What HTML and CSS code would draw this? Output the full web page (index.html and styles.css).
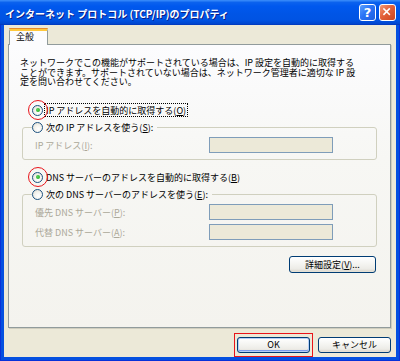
FILE: index.html
```html
<!DOCTYPE html>
<html lang="ja">
<head>
<meta charset="utf-8">
<title>インターネット プロトコル (TCP/IP)のプロパティ</title>
<link rel="stylesheet" href="styles.css">
</head>
<body>
<div class="window">
  <header class="titlebar">
    <span class="title">インターネット プロトコル (TCP/IP)のプロパティ</span>
    <div class="caption-buttons">
      <span class="cap-btn cap-help">?</span>
      <span class="cap-btn cap-close"><svg viewBox="0 0 17 17" width="15" height="15"><path d="M4.5 4.5 L10.5 10.5 M10.5 4.5 L4.5 10.5" stroke="#fff" stroke-width="1.8" stroke-linecap="square"/></svg></span>
    </div>
  </header>
  <div class="client">
    <div class="tabstrip"><div class="tab">全般</div></div>
    <div class="panel">
      <p class="desc"><span class="line">ネットワークでこの機能がサポートされている場合は、IP 設定を自動的に取得する</span><span class="line">ことができます。サポートされていない場合は、ネットワーク管理者に適切な IP 設</span><span class="line">定を問い合わせてください。</span></p>
      <div class="option opt-first">
        <span class="radio checked marked"></span>
        <span class="label focus">IP アドレスを自動的に取得する(<u>O</u>)</span>
      </div>
      <fieldset class="group">
        <legend class="option"><span class="radio"></span><span class="label">次の IP アドレスを使う(<u>S</u>):</span></legend>
        <div class="field"><span class="field-label">IP アドレス(<u>I</u>):</span><span class="textbox"></span></div>
      </fieldset>
      <div class="option opt-dns">
        <span class="radio checked marked"></span>
        <span class="label">DNS サーバーのアドレスを自動的に取得する(<u>B</u>)</span>
      </div>
      <fieldset class="group">
        <legend class="option"><span class="radio"></span><span class="label">次の DNS サーバーのアドレスを使う(<u>E</u>):</span></legend>
        <div class="field"><span class="field-label">優先 DNS サーバー(<u>P</u>):</span><span class="textbox"></span></div>
        <div class="field"><span class="field-label">代替 DNS サーバー(<u>A</u>):</span><span class="textbox"></span></div>
      </fieldset>
      <div class="adv-row"><button class="btn btn-adv">詳細設定(<u>V</u>)...</button></div>
    </div>
    <div class="footer">
      <button class="btn btn-default">OK</button>
      <button class="btn">キャンセル</button>
    </div>
  </div>
</div>
</body>
</html>
```
FILE: styles.css
```css
* { box-sizing: border-box; }
html, body { margin: 0; padding: 0; background: #fff; }
body {
  font-family: "Noto Sans CJK JP", "Liberation Sans", sans-serif;
  font-size: 9px;
  color: #000;
}
.window {
  width: 400px;
  height: 361px;
  display: flex;
  flex-direction: column;
  background: #0450e0;
  border-left: 1px solid #0831d9;
  border-right: 1px solid #0831d9;
  border-bottom: 1px solid #0831d9;
}
.titlebar {
  height: 25px;
  flex: none;
  display: flex;
  align-items: flex-start;
  padding: 0 4px 0 5px;
  margin: 0 -1px;
  background: linear-gradient(to bottom, #3d8ffb 0%, #0b62ee 10%, #0058ee 25%, #0055e6 55%, #0053e3 80%, #0047d0 94%, #0336b8 100%);
}
.title {
  color: #fff;
  font-weight: bold;
  font-size: 10px;
  line-height: 12px;
  margin-top: 8px;
  text-shadow: 1px 1px 0 #0a1e8a;
  white-space: nowrap;
}
.caption-buttons {
  margin-left: auto;
  margin-top: 4px;
  display: flex;
  gap: 3px;
}
.cap-btn {
  width: 17px;
  height: 17px;
  border: 1px solid #fff;
  border-radius: 3px;
  display: flex;
  align-items: center;
  justify-content: center;
  color: #fff;
}
.cap-help {
  background: linear-gradient(to bottom right, #5aa0ff 0%, #2a74f6 45%, #1d5ee0 100%);
  font-family: "DejaVu Sans", sans-serif;
  font-weight: bold;
  font-size: 13px;
  line-height: 1;
}
.cap-close {
  background: linear-gradient(to bottom right, #f29a76 0%, #e3613a 45%, #cc4520 100%);
}
.client {
  flex: 1;
  margin: 0 3px 3px 3px;
  background: #ece9d8;
  padding: 3px 5px 0 4px;
  display: flex;
  flex-direction: column;
}
.tabstrip {
  height: 16px;
  display: flex;
  padding-left: 1px;
  position: relative;
  z-index: 1;
}
.tab {
  width: 39px;
  height: 17px;
  background: #fcfcfe;
  border: 1px solid #919b9c;
  border-bottom: none;
  border-top: 3px solid #ffc83c;
  border-radius: 3px 3px 0 0;
  padding: 0 0 0 6px;
  line-height: 11px;
  position: relative;
}
.tab::before {
  content: "";
  position: absolute;
  left: -1px;
  right: -1px;
  top: -3px;
  height: 1px;
  background: #e68b2c;
  border-radius: 2px 2px 0 0;
}
.panel {
  height: 284px;
  border: 1px solid #919b9c;
  background: linear-gradient(to bottom, #fcfcfe 0%, #f7f7f4 40%, #f4f3ee 100%);
  box-shadow: 1px 1px 0 #d0cebf;
  display: flex;
  flex-direction: column;
  align-items: flex-start;
}
.desc {
  margin: 13px 0 0 11px;
  display: flex;
  flex-direction: column;
  white-space: nowrap;
}
.desc .line {
  display: block;
  height: 9.7px;
  line-height: 9.7px;
}
.option {
  display: flex;
  align-items: center;
  height: 14px;
  white-space: nowrap;
}
.opt-first { margin: 16px 0 0 23px; }
.opt-dns { margin: 10px 0 0 23px; }
.radio {
  width: 11px;
  height: 11px;
  border: 1px solid #1c5180;
  border-radius: 50%;
  background: radial-gradient(circle at 60% 65%, #ffffff 0%, #f4f3ee 45%, #dcd9cc 100%);
  position: relative;
  flex: none;
}
.radio.checked::before {
  content: "";
  position: absolute;
  left: 2.5px;
  top: 2.5px;
  width: 4px;
  height: 4px;
  border-radius: 50%;
  background: radial-gradient(circle at 40% 40%, #55d555, #21a121);
}
.radio.marked::after {
  content: "";
  position: absolute;
  left: 50%;
  top: 50%;
  width: 18px;
  height: 18px;
  transform: translate(-50%, -50%);
  border: 1.2px solid #e8141a;
  border-radius: 50%;
}
.label {
  margin-left: 1px;
  padding: 0 1px;
  height: 14px;
  line-height: 13px;
  border: 1px solid transparent;
}
.label.focus {
  border: 1px dotted #000;
}
.group {
  margin: 4px 0 0 13px;
  width: 355px;
  border: 1px solid #d0d0bf;
  border-radius: 3px;
  padding: 4px 0 6px 12px;
  min-inline-size: 0;
}
.group legend {
  padding: 0 2px 0 0;
  margin-left: -3px;
  height: 12px;
}
.field {
  display: flex;
  align-items: center;
  height: 16px;
}
.field + .field { margin-top: 4px; }
.field-label {
  width: 174px;
  color: #aca899;
  white-space: nowrap;
}
.textbox {
  width: 124px;
  height: 16px;
  border: 1px solid #7f9db9;
  background: #ece9d8;
}
.adv-row {
  align-self: stretch;
  display: flex;
  justify-content: flex-end;
  margin: 9px 14px 0 0;
}
.btn {
  font-family: "Noto Sans CJK JP", "Liberation Sans", sans-serif;
  font-size: 9px;
  color: #000;
  height: 16px;
  width: 73px;
  padding: 0;
  border: 1px solid #003c74;
  border-radius: 3px;
  background: linear-gradient(to bottom, #ffffff 0%, #f6f6f3 40%, #ecebe6 80%, #d6d0c5 100%);
  box-shadow: inset 0 -1px 0 #e3e0d6;
  line-height: 14px;
}
.btn-adv {
  width: 87px;
  height: 17px;
}
.footer {
  margin-top: 9px;
  display: flex;
  justify-content: flex-end;
  gap: 8px;
}
.btn-default {
  position: relative;
  box-shadow: inset 0 0 0 1px #b5cff7, inset 0 -1px 0 1px #7c9cec;
}
.btn-default::after {
  content: "";
  position: absolute;
  left: -4px;
  right: -4px;
  top: -5px;
  bottom: -5px;
  border: 1px solid #e8141a;
}
u { text-decoration: underline; text-underline-offset: 1px; }
```
